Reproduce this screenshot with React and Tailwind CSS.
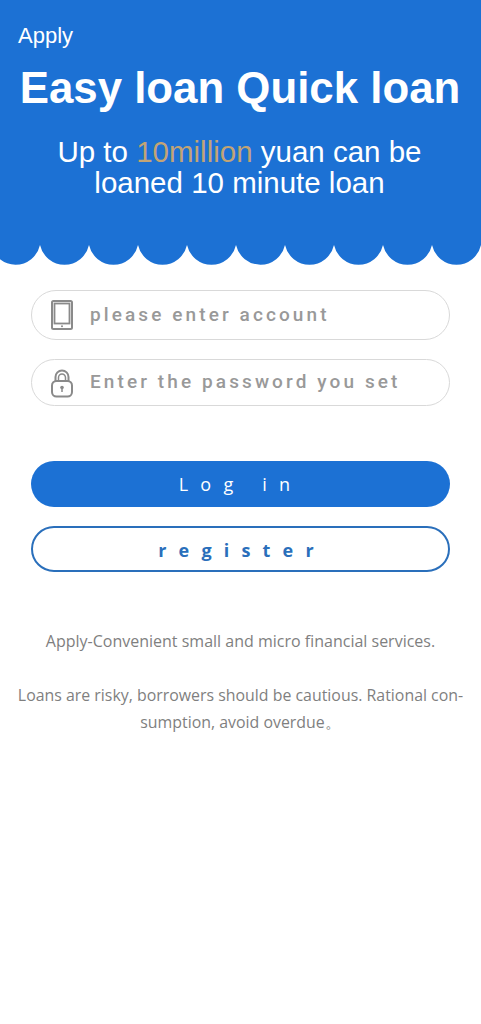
import React from 'react';

function Scallops() {
  // cusps every 49px, first one just left of the page
  const cusps = [-9, 40, 89, 138, 187, 236, 285, 334, 383, 432, 481];
  let d = 'M-9 0 ';
  cusps.forEach((x) => {
    d += `L${x} 1 A25.1 25.1 0 0 0 ${x + 49} 1 `;
  });
  d += 'L530 0 Z';
  return (
    <svg className="block w-full h-[21px]" viewBox="0 0 481 21" fill="#1c71d4">
      <path d={d} />
    </svg>
  );
}

function PhoneIcon() {
  return (
    <svg width="24" height="32" viewBox="0 0 24 32" fill="none" stroke="#8a8a8a" strokeWidth="2">
      <rect x="2" y="2" width="20" height="28" rx="1.5" />
      <rect x="4.5" y="4.5" width="15" height="20" strokeWidth="1.8" />
      <circle cx="12" cy="27.3" r="1" fill="#8a8a8a" stroke="none" />
    </svg>
  );
}

function LockIcon() {
  return (
    <svg width="24" height="30" viewBox="0 0 24 30" fill="none" stroke="#8a8a8a" strokeWidth="2">
      <path d="M5.5 13 V9 a6.5 6.5 0 0 1 13 0 V13" />
      <path d="M8.5 13 V9.5 a3.5 3.5 0 0 1 7 0 V13" strokeWidth="1.5" />
      <rect x="2" y="13" width="20" height="15.5" rx="4.5" />
      <circle cx="12" cy="19.5" r="1.8" fill="#8a8a8a" stroke="none" />
      <path d="M12 20 V24" strokeWidth="1.5" />
    </svg>
  );
}

function Field({ icon, placeholder, className }) {
  return (
    <div className={`flex items-center gap-[16px] pl-[18px] rounded-full border border-[#d9d9d9] bg-white ${className}`}>
      <div className="w-[24px] flex justify-center">{icon}</div>
      <span className="font-['Roboto',sans-serif] font-medium text-[19px] tracking-[3.1px] text-[#999999]">
        {placeholder}
      </span>
    </div>
  );
}

export default function App() {
  return (
    <div className="min-h-[1024px] bg-white font-['Liberation_Sans',sans-serif]">
      <header className="h-[244px] bg-[#1c71d4] text-white">
        <div className="px-[18px] pt-[22px] text-[22px] leading-[28px]">Apply</div>
        <h1 className="mt-[13px] pr-[1px] text-center text-[43.8px] leading-[50px] font-bold">Easy loan Quick loan</h1>
        <p className="mt-[23px] pr-[2px] text-center text-[29.5px] leading-[31px]">
          Up to <span className="text-[#c2a476]">10million</span> yuan can be
          <br />
          loaned 10 minute loan
        </p>
      </header>
      <Scallops />

      <div className="mt-[25px] mx-[31px]">
        <Field icon={<PhoneIcon />} placeholder="please enter account" className="h-[50px]" />
        <Field icon={<LockIcon />} placeholder="Enter the password you set" className="h-[47px] mt-[19px]" />

        <button className="block w-full h-[46px] mt-[55px] rounded-full bg-[#1c71d4] text-white font-['Open_Sans',sans-serif] text-[18px] tracking-[12.2px]">
          Log in
        </button>
        <button className="block w-full h-[46px] mt-[19px] pt-[3px] pl-[3px] rounded-full border-2 border-[#2a6fbb] bg-white text-[#2a6fbb] font-['Open_Sans',sans-serif] font-bold text-[18px] tracking-[12.2px]">
          register
        </button>
      </div>

      <div className="mt-[56px] px-[10px] text-center font-['Open_Sans',sans-serif] text-[16px] leading-[27px] text-[#7f7f7f]">
        <p>Apply-Convenient small and micro financial services.</p>
        <p className="mt-[27px] text-[15.9px]">
          Loans are risky, borrowers should be cautious. Rational con-
          <br />
          sumption, avoid overdue。
        </p>
      </div>
    </div>
  );
}
